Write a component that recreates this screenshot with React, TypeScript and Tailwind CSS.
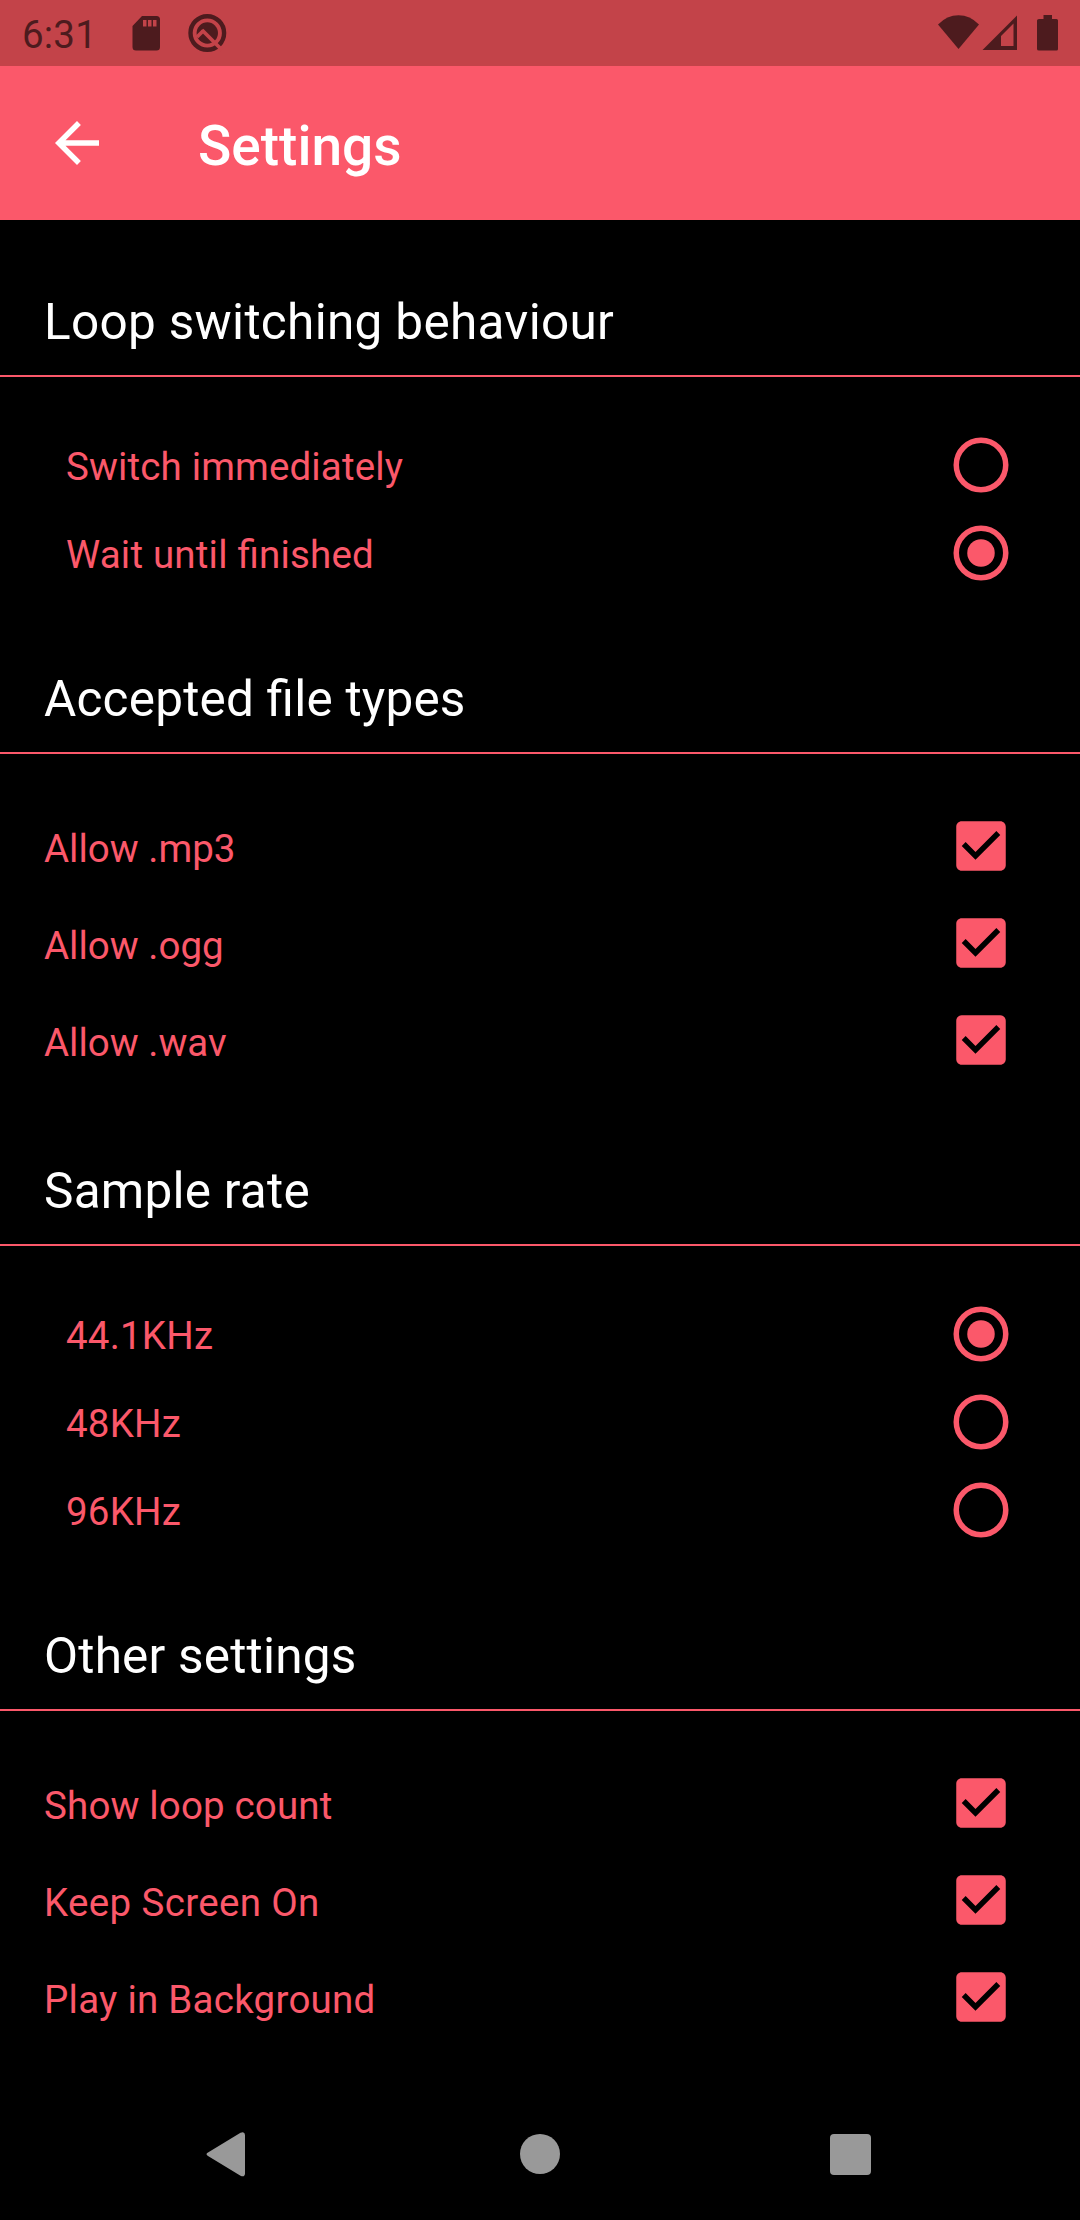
import React from "react";

type Item = { label: string; on: boolean; tracking: string };
type SectionData = { title: string; tracking: string; kind: "radio" | "check"; items: Item[] };

const sections: SectionData[] = [
  {
    title: "Loop switching behaviour",
    tracking: "tracking-[0.3px]",
    kind: "radio",
    items: [
      { label: "Switch immediately", on: false, tracking: "tracking-[0.14px]" },
      { label: "Wait until finished", on: true, tracking: "tracking-[0.19px]" },
    ],
  },
  {
    title: "Accepted file types",
    tracking: "tracking-[0.2px]",
    kind: "check",
    items: [
      { label: "Allow .mp3", on: true, tracking: "tracking-normal" },
      { label: "Allow .ogg", on: true, tracking: "tracking-normal" },
      { label: "Allow .wav", on: true, tracking: "tracking-normal" },
    ],
  },
  {
    title: "Sample rate",
    tracking: "tracking-[0.24px]",
    kind: "radio",
    items: [
      { label: "44.1KHz", on: true, tracking: "tracking-[0.2px]" },
      { label: "48KHz", on: false, tracking: "tracking-[0.2px]" },
      { label: "96KHz", on: false, tracking: "tracking-[0.2px]" },
    ],
  },
  {
    title: "Other settings",
    tracking: "tracking-[0.2px]",
    kind: "check",
    items: [
      { label: "Show loop count", on: true, tracking: "tracking-[0.16px]" },
      { label: "Keep Screen On", on: true, tracking: "tracking-[0.35px]" },
      { label: "Play in Background", on: true, tracking: "tracking-[0.26px]" },
    ],
  },
];

function Radio({ on }: { on: boolean }) {
  return (
    <svg className="size-[66px]" viewBox="0 0 24 24">
      <circle cx="12" cy="12" r="9" fill="none" stroke="#fb586a" strokeWidth="2" />
      {on && <circle cx="12" cy="12" r="5" fill="#fb586a" />}
    </svg>
  );
}

function Check() {
  return (
    <svg className="mb-px size-[66px]" viewBox="0 0 24 24">
      <path
        fill="#fb586a"
        d="M19 3H5c-1.11 0-2 .9-2 2v14c0 1.1.89 2 2 2h14c1.11 0 2-.9 2-2V5c0-1.1-.89-2-2-2zm-9 14l-5-5 1.41-1.41L10 14.17l7.59-7.59L19 8l-9 9z"
      />
    </svg>
  );
}

function Section({ title, tracking, kind, items }: SectionData) {
  const radio = kind === "radio";
  return (
    <section>
      <h2 className={`h-[155px] pt-[73px] pl-11 text-[49.5px] leading-[58px] text-white ${tracking}`}>{title}</h2>
      <div className="h-0.5 bg-[#fb586a]" />
      <ul className="pt-11">
        {items.map((item) => (
          <li
            key={item.label}
            className={
              radio
                ? "flex h-[88px] items-center justify-between pr-[66px] pl-[66px]"
                : "flex h-[97px] items-center justify-between pr-[66px] pl-11"
            }
          >
            <span
              className={`text-[38.5px] leading-[46px] text-[#fb586a] ${radio ? "pt-[3px]" : "pt-[5px]"} ${item.tracking}`}
            >
              {item.label}
            </span>
            {radio ? <Radio on={item.on} /> : <Check />}
          </li>
        ))}
      </ul>
    </section>
  );
}

function StatusBar() {
  return (
    <div className="flex h-[66px] items-center justify-between bg-[#c34349] text-[#4d1b1e]">
      <div className="flex h-full items-center pl-[22px]">
        <span className="w-[101px] pt-[3px] text-[38.5px] leading-[46px] tracking-[0.2px]">6:31</span>
        <svg className="ml-[3px] h-[66px] w-11" viewBox="126 0 44 66" fill="currentColor">
          <path
            fillRule="evenodd"
            d="M142 16h14.500a3.500 3.500 0 0 1 3.500 3.500V47a3.500 3.500 0 0 1-3.500 3.500H136a3.500 3.500 0 0 1-3.500-3.500V26zM143 20v6.500h3.500V20zM148 20v6.500h3.500V20zM153 20v6.500h3.500V20z"
          />
        </svg>
        <svg className="ml-[10px] h-[66px] w-[54px]" viewBox="180 0 54 66" fill="none">
          <circle cx="207.300" cy="33" r="16.800" stroke="currentColor" strokeWidth="4.400" />
          <circle cx="207.300" cy="33" r="10.700" fill="currentColor" />
          <path d="M202 30L222 50" stroke="#c34349" strokeWidth="3.800" />
          <path d="M197 37L203.500 30.500" stroke="#c34349" strokeWidth="3.800" />
        </svg>
      </div>
      <svg className="h-[66px] w-[144px]" viewBox="936 0 144 66" fill="currentColor">
        <path d="M958.500 49L938 24.500Q947 15.300 958.500 15.300T979 24.500z" />
        <path fillRule="evenodd" d="M982.500 50H1017V15.500zM1001 46V36L1013.500 23.500V46z" />
        <path d="M1043.500 15h8.500v4h4.500q1.500 0 1.500 1.500V49q0 1.500-1.500 1.500h-17.500q-2 0-2-1.500V20.500q0-1.500 2-1.500h4.500z" />
      </svg>
    </div>
  );
}

export default function App() {
  return (
    <div className="flex h-[2220px] w-[1080px] flex-col overflow-hidden bg-black font-['Roboto',sans-serif] [font-feature-settings:'liga'_1]">
      <StatusBar />
      <header className="flex h-[154px] items-center bg-[#fb586a] pl-11">
        <svg className="size-[66px]" viewBox="0 0 24 24" fill="white">
          <path d="M20 11H7.830l5.590-5.590L12 4l-8 8 8 8 1.410-1.410L7.830 13H20v-2z" />
        </svg>
        <h1 className="ml-[88px] pt-[6px] text-[55px] leading-[64px] font-medium text-white">Settings</h1>
      </header>
      <main>
        {sections.map((s) => (
          <Section key={s.title} {...s} />
        ))}
      </main>
      <nav className="mt-auto flex h-[132px] items-center justify-between px-[192px]">
        <svg className="size-[66px]" viewBox="192 2121 66 66" fill="#999">
          <path d="M208 2152.500L240.500 2132.800Q244.800 2131 245 2135V2173.500Q244.800 2177.500 240.500 2175.800L208 2156Q205 2154 208 2152.500z" />
        </svg>
        <div className="flex size-[66px] items-center justify-center">
          <div className="size-10 rounded-full bg-[#999]" />
        </div>
        <div className="flex size-[66px] items-center pl-2">
          <div className="size-[41px] rounded bg-[#999]" />
        </div>
      </nav>
    </div>
  );
}
